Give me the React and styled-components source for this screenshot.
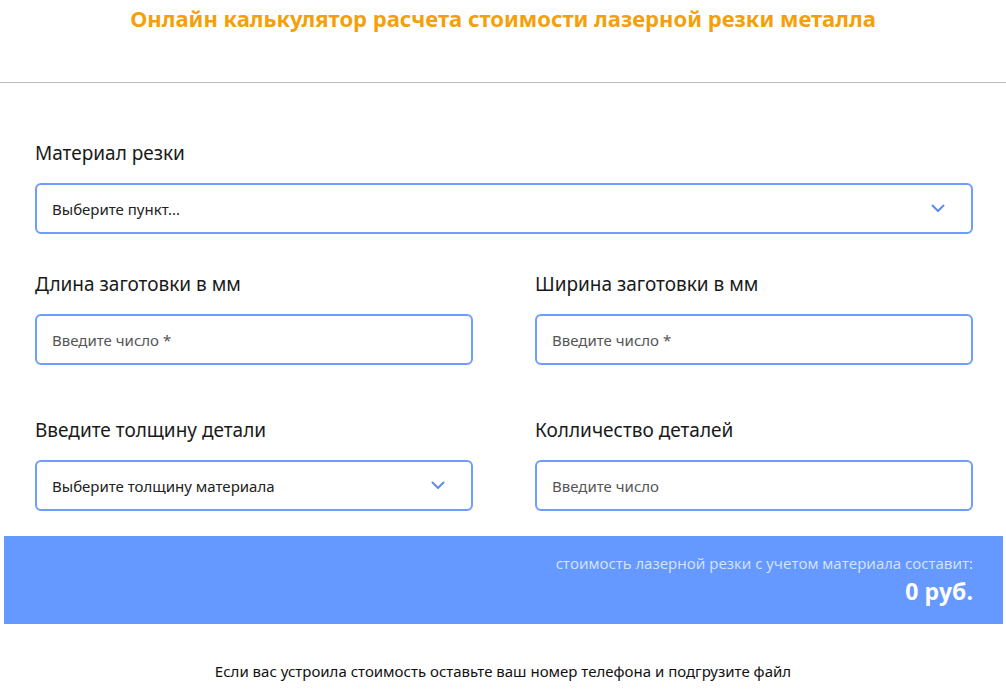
import React from 'react';
import styled, { createGlobalStyle } from 'styled-components';

const Global = createGlobalStyle`
  body { margin: 0; background: #fff; font-family: "Open Sans", "Noto Sans", sans-serif; }
`;

const Title = styled.h1`
  margin: 0;
  height: 83px;
  box-sizing: border-box;
  padding-top: 3px;
  text-align: center;
  font-family: "Noto Sans", sans-serif;
  font-size: 22px;
  font-weight: 700;
  color: #f59f0a;
  border-bottom: 1px solid #bdbdbd;
`;

const Form = styled.div`
  padding: 55px 33px 25px 35px;
  display: grid;
  grid-template-columns: 1fr 1fr;
  column-gap: 62px;
`;

const Field = styled.div`
  grid-column: ${p => (p.$wide ? '1 / -1' : 'auto')};
  margin-bottom: ${p => p.$mb || 0}px;
`;

const Label = styled.div`
  font-family: "Noto Sans", sans-serif;
  font-size: 19px;
  color: #1a1a1a;
  line-height: 30px;
  margin-bottom: 15px;
`;

const Box = styled.div`
  height: 51px;
  box-sizing: border-box;
  border: 2px solid #6e9cff;
  border-radius: 6px;
  display: flex;
  align-items: center;
  justify-content: space-between;
  padding: 0 26px 0 15px;
  font-family: "Noto Sans", sans-serif;
  font-size: 15px;
  color: ${p => (p.$placeholder ? '#555' : '#222')};
`;

const Chevron = () => (
  <svg width="14" height="9" viewBox="0 0 14 9" fill="none">
    <path d="M1.5 1.5L7 7l5.5-5.5" stroke="#5b8cf0" strokeWidth="2" strokeLinecap="round" strokeLinejoin="round" />
  </svg>
);

const Result = styled.div`
  margin: 0 3px 0 4px;
  height: 88px;
  background: #6699ff;
  display: flex;
  flex-direction: column;
  align-items: flex-end;
  justify-content: center;
  padding-right: 30px;
  font-family: "Open Sans", sans-serif;
`;

const ResultNote = styled.div`
  font-size: 15px;
  color: #d8e3ff;
`;

const Sum = styled.div`
  font-size: 23px;
  font-weight: 700;
  color: #fff;
  margin-top: 2px;
`;

const Footer = styled.p`
  margin: 37px 0 0;
  text-align: center;
  font-family: "Noto Sans", sans-serif;
  font-size: 15px;
  color: #111;
`;

export default function App() {
  return (
    <>
      <Global />
      <Title>Онлайн калькулятор расчета стоимости лазерной резки металла</Title>
      <Form>
        <Field $wide $mb={35}>
          <Label>Материал резки</Label>
          <Box>Выберите пункт... <Chevron /></Box>
        </Field>
        <Field $mb={50}>
          <Label>Длина заготовки в мм</Label>
          <Box $placeholder>Введите число *</Box>
        </Field>
        <Field $mb={50}>
          <Label>Ширина заготовки в мм</Label>
          <Box $placeholder>Введите число *</Box>
        </Field>
        <Field>
          <Label>Введите толщину детали</Label>
          <Box>Выберите толщину материала <Chevron /></Box>
        </Field>
        <Field>
          <Label>Колличество деталей</Label>
          <Box $placeholder>Введите число</Box>
        </Field>
      </Form>
      <Result>
        <ResultNote>стоимость лазерной резки с учетом материала составит:</ResultNote>
        <Sum>0 руб.</Sum>
      </Result>
      <Footer>Если вас устроила стоимость оставьте ваш номер телефона и подгрузите файл</Footer>
    </>
  );
}
